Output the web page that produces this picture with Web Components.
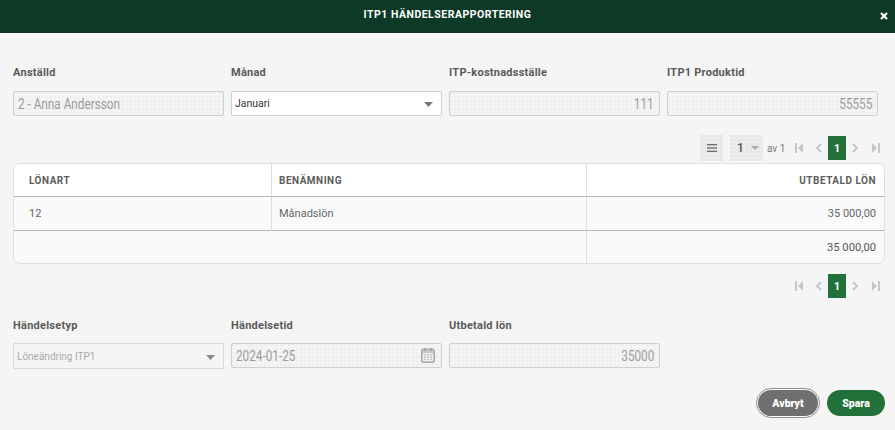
<!DOCTYPE html>
<html lang="sv">
<head>
<meta charset="utf-8">
<title>ITP1 Händelserapportering</title>
<style>
    html, body { margin: 0; height: 100%; }
    body { background: #f5f5f5; font-family: Roboto, "Liberation Sans", sans-serif; overflow: hidden; }
</style>
</head>
<body>
<itp-dialog></itp-dialog>
<script>
const DOTS = 'radial-gradient(circle at 1px 1px, rgba(0,0,0,.04) .6px, transparent 1px) 0 0 / 4px 4px';

class FormField extends HTMLElement {
    constructor() {
        super();
        this.attachShadow({ mode: 'open' });
        const side = this.getAttribute('side') || 'left';
        const type = this.getAttribute('type') || 'text';
        const disabled = this.hasAttribute('disabled');
        const value = this.getAttribute('value') || '';
        const isSelect = type === 'select';
        const trailing = isSelect
            ? `<svg class="caret" width="9" height="5" viewBox="0 0 9 5"><path d="M0 0h9L4.5 5z" fill="${disabled ? '#8a8a8a' : '#777'}"/></svg>`
            : type === 'date'
                ? `<svg class="cal" width="14" height="15" viewBox="0 0 14 15"><rect x=".5" y="1" width="13" height="13.5" rx="1.5" fill="#c4c4c4" stroke="#a8a8a8"/><rect x="3" y="0" width="2" height="3" fill="#a8a8a8"/><rect x="9" y="0" width="2" height="3" fill="#a8a8a8"/><path d="M2.5 5.5h9v7h-9zM5.5 5.5v7M8.5 5.5v7M2.5 8h9M2.5 10.5h9" fill="none" stroke="#f5f5f5" stroke-width=".9"/></svg>`
                : '';
        this.shadowRoot.innerHTML = `
            <style>
                :host { display: block; min-width: 0; }
                label {
                    display: block;
                    height: var(--label-height, 25px);
                    line-height: 14px;
                    font-size: 11px;
                    font-weight: 700;
                    letter-spacing: .25px;
                    color: #5a5a5a;
                }
                .box {
                    box-sizing: border-box;
                    height: 25px;
                    display: flex;
                    align-items: center;
                    justify-content: space-between;
                    padding: 0 5px 0 4px;
                    border: 1px solid #cfcfcf;
                    border-radius: 2px;
                    color: #9b9b9b;
                    font-size: 14px;
                    background: ${DOTS}, #f4f4f4;
                }
                /* the original input font is narrow, nothing installed comes close */
                .box span { display: inline-block; transform: scaleX(.84); transform-origin: left center; }
                .box.right { justify-content: flex-end; }
                .box.right span { transform-origin: right center; }
                .box.select { font-size: 10.5px; padding: 0 8px 0 3px; color: #333; background: #fff; }
                .box.select span { transform: none; }
                .box.select.off { height: 26px; font-size: 10px; color: #aaa; background: #f5f5f5; border-color: #d8d8d8; }
                .caret { flex: none; margin-top: 2px; }
                .cal { flex: none; margin-right: 1px; }
            </style>
            <label>${this.getAttribute('label')}</label>
            <div class="box ${side} ${isSelect ? 'select' : ''} ${disabled ? 'off' : ''}">
                <span>${value}</span>${trailing}
            </div>
        `;
    }
}

class TablePager extends HTMLElement {
    constructor() {
        super();
        this.attachShadow({ mode: 'open' });
        const full = this.hasAttribute('full');
        const controls = full ? `
            <span class="menu"><svg width="10" height="8" viewBox="0 0 10 8"><path d="M0 .75h10M0 4h10M0 7.25h10" stroke="#444" stroke-width="1.2"/></svg></span>
            <span class="size">1<svg width="8" height="4" viewBox="0 0 8 4"><path d="M0 0h8L4 4z" fill="#aaa"/></svg></span>
            <span class="of">av 1</span>` : '';
        this.shadowRoot.innerHTML = `
            <style>
                :host { display: flex; justify-content: flex-end; align-items: center; }
                .menu, .size {
                    box-sizing: border-box;
                    height: 26px;
                    display: flex;
                    align-items: center;
                    background: ${DOTS}, #ebebeb;
                }
                .menu { width: 23px; justify-content: center; margin-right: 7px; }
                .size { width: 33px; padding-left: 7px; gap: 7px; font-size: 12px; font-weight: 500; color: #555; margin-right: 4px; }
                .of { width: 17px; white-space: nowrap; font-size: 10px; color: #777; margin-right: 11px; }
                .nav { display: block; flex: none; }
                .cur {
                    width: 18px;
                    height: 24px;
                    margin: 0 6px;
                    display: flex;
                    align-items: center;
                    justify-content: center;
                    background: #22703a;
                    color: #fff;
                    font-size: 11.5px;
                    font-weight: 700;
                }
                .gap { width: 12px; flex: none; }
                .gap.wide { width: 13px; }
            </style>
            ${controls}
            <svg class="nav" width="8" height="10" viewBox="0 0 8 10"><path d="M0 0h2v10H0zM8 0v10L3 5z" fill="#c6c6c6"/></svg>
            <span class="gap"></span>
            <svg class="nav" width="7" height="10" viewBox="0 0 7 10"><path d="M6 1 2 5l4 4" fill="none" stroke="#c6c6c6" stroke-width="2"/></svg>
            <span class="cur">1</span>
            <svg class="nav" width="7" height="10" viewBox="0 0 7 10"><path d="M1 1l4 4-4 4" fill="none" stroke="#c6c6c6" stroke-width="2"/></svg>
            <span class="gap wide"></span>
            <svg class="nav" width="8" height="10" viewBox="0 0 8 10"><path d="M8 0H6v10h2zM0 0v10l5-5z" fill="#c6c6c6"/></svg>
        `;
    }
}

class SalaryTable extends HTMLElement {
    constructor() {
        super();
        this.attachShadow({ mode: 'open' });
        this.shadowRoot.innerHTML = `
            <style>
                :host {
                    display: grid;
                    grid-template-columns: 258px 315px 1fr;
                    box-sizing: border-box;
                    height: 101px;
                    border: 1px solid #e0e0e0;
                    border-radius: 7px;
                    overflow: hidden;
                    background: #fafafa;
                    font-size: 11px;
                    color: #666;
                }
                div { box-sizing: border-box; display: flex; align-items: center; border-right: 1px solid #dedede; }
                .num { border-right: 0; justify-content: flex-end; padding-right: 8px; }
                .th {
                    height: 33px;
                    background: #fff;
                    font-size: 10px;
                    font-weight: 700;
                    letter-spacing: .5px;
                    color: #5c5c5c;
                    border-bottom: 1px solid #b5b5b5;
                }
                .td { height: 34px; border-bottom: 1px solid #b5b5b5; }
                .ft { height: 32px; }
                .pad { padding-left: 15px; }
                .pad2 { padding-left: 7px; }
                .span { grid-column: span 2; }
                .sum { font-size: 11.2px; color: #555; }
            </style>
            <div class="th pad">LÖNART</div>
            <div class="th pad2">BENÄMNING</div>
            <div class="th num">UTBETALD LÖN</div>
            <div class="td pad">12</div>
            <div class="td pad2">Månadslön</div>
            <div class="td num">35 000,00</div>
            <div class="ft span"></div>
            <div class="ft num sum">35 000,00</div>
        `;
    }
}

class ActionButton extends HTMLElement {
    constructor() {
        super();
        this.attachShadow({ mode: 'open' });
        const cancel = this.hasAttribute('cancel');
        this.shadowRoot.innerHTML = `
            <style>
                :host { display: block; }
                button {
                    box-sizing: border-box;
                    display: block;
                    height: 26px;
                    width: ${cancel ? '60px' : '58px'};
                    padding: 0;
                    border: 0;
                    border-radius: 13px;
                    color: #fff;
                    font: 900 10.5px Roboto, "Liberation Sans", sans-serif;
                    background: ${cancel ? `${DOTS}, #707070` : '#22703a'};
                    ${cancel ? 'margin: 2px; outline: 1px solid #8c8c8c; outline-offset: 1px; box-shadow: 0 0 0 1px #fff;' : ''}
                }
            </style>
            <button><slot></slot></button>
        `;
    }
}

class ItpDialog extends HTMLElement {
    constructor() {
        super();
        this.attachShadow({ mode: 'open' });
        this.shadowRoot.innerHTML = `
            <style>
                :host { display: block; height: 430px; background: #f5f5f5; }
                header {
                    position: relative;
                    height: 33px;
                    display: flex;
                    align-items: center;
                    justify-content: center;
                    padding-bottom: 4px;
                    box-sizing: border-box;
                    background: #0d3a26;
                    color: #fff;
                    font-size: 10.5px;
                    font-weight: 700;
                    letter-spacing: .5px;
                }
                .close { position: absolute; right: 7px; top: 12px; display: block; }
                main { padding: 33px 10px 0 13px; }
                .row { display: grid; grid-template-columns: repeat(4, 211px); column-gap: 7px; }
                .top { height: 64px; }
                table-pager.p1 { height: 26px; margin: 5px 5px 2px 0; }
                table-pager.p2 { height: 24px; margin: 10px 5px 0 0; }
                .bottom { --label-height: 24px; margin-top: 21px; height: 50px; }
                .actions { display: flex; justify-content: flex-end; align-items: center; gap: 7px; margin-top: 19px; }
            </style>
            <header>
                ITP1 HÄNDELSERAPPORTERING
                <svg class="close" width="8" height="8" viewBox="0 0 8 8"><path d="M1 1l6 6M7 1 1 7" stroke="#fff" stroke-width="2.2"/></svg>
            </header>
            <main>
                <div class="row top">
                    <form-field label="Anställd" value="2 - Anna Andersson" disabled></form-field>
                    <form-field label="Månad" value="Januari" type="select"></form-field>
                    <form-field label="ITP-kostnadsställe" value="111" side="right" disabled></form-field>
                    <form-field label="ITP1 Produktid" value="55555" side="right" disabled></form-field>
                </div>
                <table-pager class="p1" full></table-pager>
                <salary-table></salary-table>
                <table-pager class="p2"></table-pager>
                <div class="row bottom">
                    <form-field label="Händelsetyp" value="Löneändring ITP1" type="select" disabled></form-field>
                    <form-field label="Händelsetid" value="2024-01-25" type="date" disabled></form-field>
                    <form-field label="Utbetald lön" value="35000" side="right" disabled></form-field>
                </div>
                <div class="actions">
                    <action-button cancel>Avbryt</action-button>
                    <action-button>Spara</action-button>
                </div>
            </main>
        `;
    }
}

customElements.define('form-field', FormField);
customElements.define('table-pager', TablePager);
customElements.define('salary-table', SalaryTable);
customElements.define('action-button', ActionButton);
customElements.define('itp-dialog', ItpDialog);
</script>
</body>
</html>
